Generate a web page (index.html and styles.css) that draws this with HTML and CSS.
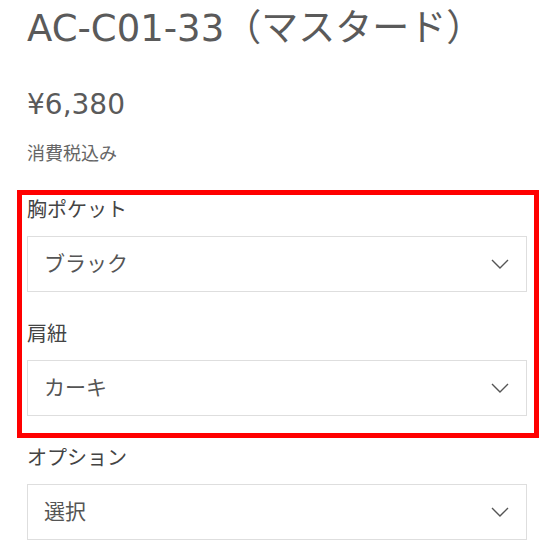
FILE: index.html
```html
<!DOCTYPE html>
<html lang="ja">
<head>
<meta charset="utf-8">
<link rel="stylesheet" href="styles.css">
</head>
<body>
<div class="page">
  <h1 class="title">AC-C01-33（マスタード）</h1>
  <div class="price">¥6,380</div>
  <div class="tax">消費税込み</div>

  <div class="highlight">
    <div class="field">
      <div class="label">胸ポケット</div>
      <div class="select">
        <span class="value">ブラック</span>
        <svg class="chev" width="18" height="10" viewBox="0 0 18 10"><polyline points="1,1 9,9 17,1" fill="none" stroke="#555" stroke-width="1.4"/></svg>
      </div>
    </div>
    <div class="field">
      <div class="label">肩紐</div>
      <div class="select">
        <span class="value">カーキ</span>
        <svg class="chev" width="18" height="10" viewBox="0 0 18 10"><polyline points="1,1 9,9 17,1" fill="none" stroke="#555" stroke-width="1.4"/></svg>
      </div>
    </div>
  </div>

  <div class="field field-after">
    <div class="label">オプション</div>
    <div class="select">
      <span class="value">選択</span>
      <svg class="chev" width="18" height="10" viewBox="0 0 18 10"><polyline points="1,1 9,9 17,1" fill="none" stroke="#555" stroke-width="1.4"/></svg>
    </div>
  </div>
</div>
</body>
</html>
```

FILE: styles.css
```css
* { box-sizing: border-box; }
html, body { margin: 0; padding: 0; background: #fff; }
body { font-family: "Noto Sans CJK JP", sans-serif; color: #555; }

.page {
  width: 500px;
  margin-left: 27px;
  padding-top: 7px;
}

.title {
  margin: 0;
  font-family: "DejaVu Sans", "Noto Sans CJK JP", sans-serif;
  font-weight: normal;
  font-size: 37px;
  line-height: 44px;
  color: #5a5a5a;
  white-space: nowrap;
}

.price {
  margin-top: 37px;
  font-family: "DejaVu Sans", "Noto Sans CJK JP", sans-serif;
  font-size: 28px;
  line-height: 34px;
  color: #5a5a5a;
}

.tax {
  margin-top: 17px;
  font-size: 18px;
  line-height: 26px;
  color: #666;
}

.highlight {
  border: 5px solid #ff0000;
  margin: 25px -12px 5px -10px;
  padding: 0 7px 17px 5px;
  display: flex;
  flex-direction: column;
  gap: 27px;
}

.label {
  font-size: 20px;
  line-height: 28px;
  color: #444;
  margin-bottom: 13px;
}

.select {
  height: 56px;
  border: 1px solid #dedede;
  display: flex;
  align-items: center;
  justify-content: space-between;
  padding: 0 17px 0 16px;
}

.value {
  font-size: 21px;
  line-height: 28px;
  color: #555;
  margin-bottom: 5px;
}

.chev { display: block; }
```
